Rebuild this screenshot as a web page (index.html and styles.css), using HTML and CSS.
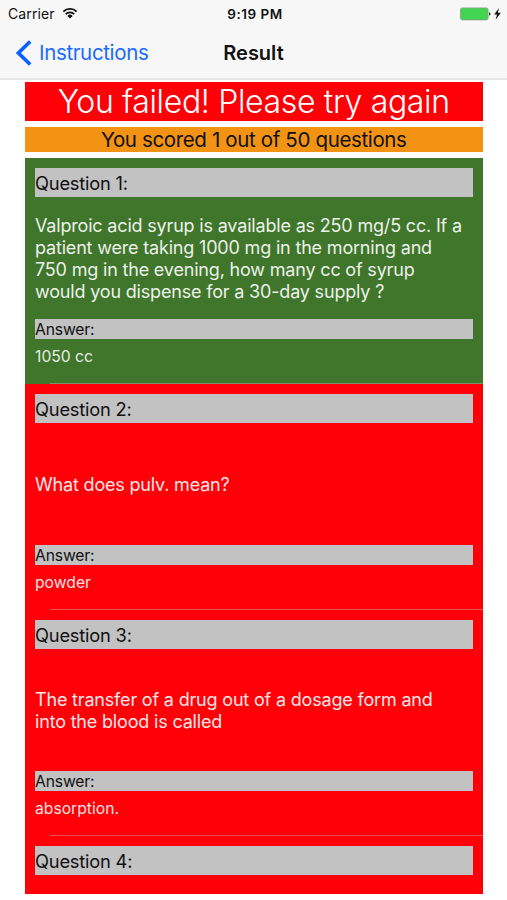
FILE: index.html
```html
<!DOCTYPE html>
<html lang="en">
<head>
    <meta charset="UTF-8">
    <meta name="viewport" content="width=device-width, initial-scale=1.0">
    <title>Result</title>
    <link rel="stylesheet" href="styles.css">
</head>
<body>
    <header>
        <div class="status-bar">
            <div class="carrier">
                <span>Carrier</span>
                <svg class="wifi" viewBox="0 0 16 12" width="16" height="12">
                    <path d="M1.3 4.6a9.6 9.6 0 0 1 13.4 0M3.7 7.1a6.1 6.1 0 0 1 8.6 0" fill="none" stroke="#111" stroke-width="1.8"/>
                    <path d="M8 11.6L5.4 8.9a3.7 3.7 0 0 1 5.2 0z" fill="#111"/>
                </svg>
            </div>
            <div class="time">9:19 PM</div>
            <div class="battery">
                <svg viewBox="0 0 42 14" width="42" height="14">
                    <rect x="0.5" y="0.9" width="27.6" height="12" rx="1.8" fill="#43d551" stroke="#8d9b8e" stroke-width="0.8"/>
                    <path d="M29 5.2q1.5 0 1.5 1.7t-1.5 1.7z" fill="#333"/>
                    <path d="M39 0.9L34.2 7.6h2.8l-1.4 5.2 5.2-7h-3z" fill="#111"/>
                </svg>
            </div>
        </div>
        <nav class="nav-bar">
            <a class="back" href="#">
                <svg viewBox="0 0 16 26" width="16" height="26">
                    <path d="M14.2 1.5L2.4 13l11.8 11.5" fill="none" stroke="#0a60ff" stroke-width="3.6"/>
                </svg>
                <span>Instructions</span>
            </a>
            <h1>Result</h1>
        </nav>
    </header>

    <main>
        <div class="verdict"><span>You failed! Please try again</span></div>
        <div class="score"><span>You scored 1 out of 50 questions</span></div>

        <div class="list">
            <div class="item correct">
                <h2>Question 1:</h2>
                <p class="question">Valproic acid syrup is available as 250 mg/5 cc. If a<br>patient were taking 1000 mg in the morning and<br>750 mg in the evening, how many cc of syrup<br>would you dispense for a 30-day supply ?</p>
                <h3>Answer:</h3>
                <p class="answer">1050 cc</p>
            </div>
            <div class="item wrong">
                <h2>Question 2:</h2>
                <p class="question">What does pulv. mean?</p>
                <h3>Answer:</h3>
                <p class="answer">powder</p>
            </div>
            <div class="item wrong">
                <h2>Question 3:</h2>
                <p class="question">The transfer of a drug out of a dosage form and<br>into the blood is called</p>
                <h3>Answer:</h3>
                <p class="answer">absorption.</p>
            </div>
            <div class="item wrong">
                <h2>Question 4:</h2>
            </div>
        </div>
    </main>
</body>
</html>
```
FILE: styles.css
```css
* {
    box-sizing: border-box;
}
body {
    margin: 0;
    height: 900px;
    overflow: hidden;
    background-color: #fff;
    font-family: Inter, "Liberation Sans", sans-serif;
    color: #111;
}
h1, h2, h3, p {
    margin: 0;
    font-weight: 400;
}
svg {
    display: block;
}
header {
    height: 80px;
    background-color: #f7f7f7;
    border-bottom: 2px solid #e6e6e6;
}
.status-bar {
    display: grid;
    grid-template-columns: 1fr auto 1fr;
    align-items: center;
    height: 27px;
    padding: 0 5px 0 8px;
    font-size: 14px;
}
.carrier {
    display: flex;
    align-items: center;
    gap: 7px;
    letter-spacing: 0.1px;
}
.wifi {
    margin-top: -2px;
}
.time {
    font-weight: 600;
    letter-spacing: 0.5px;
    font-size: 13.5px;
}
.battery {
    justify-self: end;
}
.nav-bar {
    display: grid;
    grid-template-columns: 1fr auto 1fr;
    align-items: center;
    height: 51px;
    padding: 0 16px;
}
.nav-bar h1 {
    font-size: 20px;
    font-weight: 600;
    letter-spacing: 0;
}
.back {
    display: flex;
    align-items: center;
    gap: 7px;
    color: #1a6bff;
    font-size: 20.5px;
    letter-spacing: -0.35px;
    text-decoration: none;
}
main {
    margin: 0 24.5px 0 25px;
    padding-top: 2px;
}
.verdict {
    height: 39px;
    line-height: 39px;
    background-color: #ff0008;
    color: #fff;
    font-size: 32px;
    font-weight: 300;
    letter-spacing: -0.35px;
    text-align: center;
    white-space: nowrap;
}
.score {
    height: 25px;
    margin: 6px 0;
    line-height: 26px;
    background-color: #f39313;
    font-size: 20.5px;
    letter-spacing: -0.36px;
    text-align: center;
    white-space: nowrap;
}
.list {
    height: 736px;
    overflow: hidden;
}
.item {
    position: relative;
    height: 226px;
    padding: 10px 10px 0;
}
.item::after {
    content: "";
    position: absolute;
    left: 25px;
    right: 0;
    bottom: 0;
    height: 1px;
    background-color: rgba(200, 200, 200, 0.4);
}
.correct {
    background-color: #40762b;
}
.wrong {
    background-color: #ff0008;
}
.item h2 {
    height: 29px;
    line-height: 30px;
    background-color: #c2c2c2;
    font-size: 18.3px;
    letter-spacing: -0.2px;
}
.question {
    display: flex;
    align-items: center;
    height: 122px;
    padding-top: 2px;
    color: #fff;
    opacity: 0.9;
    font-size: 18px;
    letter-spacing: -0.18px;
    line-height: 21.8px;
    white-space: nowrap;
}
.item h3 {
    height: 20px;
    line-height: 21px;
    background-color: #c2c2c2;
    font-size: 15.7px;
    letter-spacing: -0.15px;
}
.answer {
    color: #fff;
    opacity: 0.88;
    font-size: 15.7px;
    line-height: 20px;
    padding-top: 8px;
}
```
